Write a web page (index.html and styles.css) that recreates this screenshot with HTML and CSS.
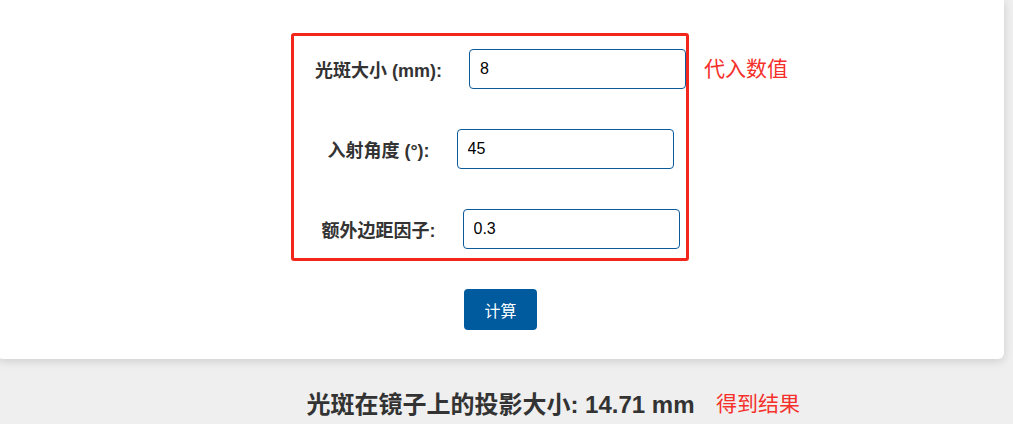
FILE: index.html
```html
<!DOCTYPE html>
<html lang="zh-CN">

<head>
  <meta charset="UTF-8">
  <meta name="viewport" content="width=device-width, initial-scale=1.0">
  <title>光斑投影计算</title>
  <link rel="stylesheet" href="styles.css">
</head>

<body class="page">
  <div class="calc-card">
    <div class="form-row">
      <label class="form-label" for="spot">光斑大小 (mm):</label>
      <input class="form-input" id="spot" type="text" value="8">
    </div>
    <div class="form-row">
      <label class="form-label" for="angle">入射角度 (°):</label>
      <input class="form-input" id="angle" type="text" value="45">
    </div>
    <div class="form-row">
      <label class="form-label" for="margin">额外边距因子:</label>
      <input class="form-input" id="margin" type="text" value="0.3">
    </div>
    <button class="calc-btn" type="button">计算</button>
  </div>

  <h2 class="result">光斑在镜子上的投影大小: 14.71 mm</h2>

  <!-- annotations -->
  <div class="mark-box"></div>
  <div class="mark-note note-input">代入数值</div>
  <div class="mark-note note-result">得到结果</div>
</body>

</html>
```

FILE: styles.css
```css
.page {
  margin: 0;
  background-color: #efefef;
  font-family: "Liberation Sans", "Noto Sans CJK SC", sans-serif;
  color: #333;
}

.calc-card {
  width: 1007px;
  margin-left: -3px;
  box-sizing: border-box;
  padding: 49px 0 29px;
  background-color: #fff;
  border-radius: 0 0 6px 6px;
  box-shadow: 0 2px 10px rgba(0, 0, 0, 0.15);
  display: flex;
  flex-direction: column;
  align-items: center;
}

.form-row {
  display: flex;
  align-items: center;
  gap: 27px;
  margin-bottom: 40px;
}

.form-label {
  font-size: 18px;
  font-weight: bold;
  color: #333;
}

.form-input {
  width: 217px;
  height: 40px;
  box-sizing: border-box;
  padding: 0 10px;
  border: 1px solid #0b5a9a;
  border-radius: 4px;
  font-family: "Liberation Sans", sans-serif;
  font-size: 16px;
  color: #000;
  background-color: #fff;
}

.calc-btn {
  height: 41px;
  padding: 0 20px;
  border: none;
  border-radius: 4px;
  background-color: #005a9e;
  color: #fff;
  font-family: "Liberation Sans", "Noto Sans CJK SC", sans-serif;
  font-size: 16px;
}

.result {
  width: 1007px;
  margin: 32px 0 0 -3px;
  font-size: 24px;
  line-height: 28px;
  font-weight: bold;
  text-align: center;
  color: #333;
}

.mark-box {
  position: absolute;
  left: 291px;
  top: 33px;
  width: 398px;
  height: 228px;
  box-sizing: border-box;
  border: 3px solid #f2261b;
  border-radius: 3px;
}

.mark-note {
  position: absolute;
  font-size: 21px;
  line-height: 24px;
  color: #f5302a;
}

.note-input {
  left: 704px;
  top: 57px;
}

.note-result {
  left: 716px;
  top: 392px;
}
```
